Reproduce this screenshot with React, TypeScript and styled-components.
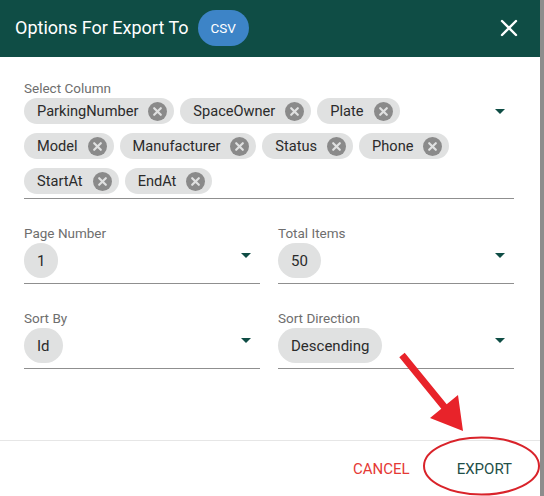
import * as React from "react";
import styled, {createGlobalStyle, css} from "styled-components";

const GlobalStyle = createGlobalStyle`
    html, body {
        margin: 0;
        padding: 0;
        background: #8d8d8d;
        font-family: Roboto, "Liberation Sans", sans-serif;
    }
`;

const teal = "#0f4d45";

const columns = [
    "ParkingNumber", "SpaceOwner", "Plate",
    "Model", "Manufacturer", "Status", "Phone",
    "StartAt", "EndAt",
];

const Dialog = styled.div`
    position: relative;
    width: 540px;
    height: 496px;
    background: #fff;
    display: flex;
    flex-direction: column;
`;

const Header = styled.div`
    height: 57px;
    flex-shrink: 0;
    background: ${teal};
    display: flex;
    align-items: center;
    padding: 0 22px 2px 15px;
    box-sizing: border-box;
`;

const Title = styled.h2`
    margin: 0;
    font-size: 18px;
    font-weight: 400;
    color: #fff;
`;

const Badge = styled.span`
    margin-left: 9px;
    height: 36px;
    padding: 0 13px;
    border-radius: 18px;
    background: #3d84c7;
    color: #fff;
    font-size: 13.5px;
    display: inline-flex;
    align-items: center;
`;

const CloseButton = styled.button`
    margin-left: auto;
    border: 0;
    padding: 0;
    background: none;
    display: flex;
    cursor: pointer;
`;

const Body = styled.div`
    flex: 1;
    padding: 24px 26px 0 24px;
`;

const Field = styled.div`
    display: flex;
    flex-direction: column;
`;

const Label = styled.label`
    font-size: 13.5px;
    line-height: 15px;
    color: #6e6e6e;
`;

const Control = styled.div<{ $pad: number }>`
    display: flex;
    align-items: flex-start;
    margin-top: 2px;
    padding-bottom: ${p => p.$pad}px;
    border-bottom: 1px solid #8f8f8f;
`;

const ChipList = styled.div`
    flex: 1;
    display: flex;
    flex-wrap: wrap;
    gap: 9px 6px;
`;

const chipSizes = {
    sm: css`
        height: 26px;
        padding: 0 7px 0 13px;
        border-radius: 13px;
        font-size: 14.6px;
        gap: 10px;
    `,
    lg: css`
        height: 35px;
        padding: 0 13px;
        border-radius: 17.5px;
        font-size: 15px;
    `,
};

const Chip = styled.span<{ $size: "sm" | "lg" }>`
    display: inline-flex;
    align-items: center;
    background: #e0e1e1;
    color: #2b2b2b;
    ${p => chipSizes[p.$size]}
`;

const Caret = styled.span<{ $top: number }>`
    width: 0;
    height: 0;
    margin: ${p => p.$top}px 9px 0 12px;
    border-left: 5px solid transparent;
    border-right: 5px solid transparent;
    border-top: 5px solid ${teal};
`;

const Grid = styled.div`
    margin-top: 27px;
    display: grid;
    grid-template-columns: 1fr 1fr;
    column-gap: 18px;
    row-gap: 27px;
`;

const Footer = styled.div`
    height: 56px;
    flex-shrink: 0;
    border-top: 1px solid #e6e6e6;
    display: flex;
    justify-content: flex-end;
    align-items: center;
    gap: 23px;
    padding: 0 16px;
    box-sizing: border-box;
`;

const TextButton = styled.button<{ $tone: "danger" | "primary" }>`
    border: 0;
    background: none;
    padding: 8px 12px;
    font-family: inherit;
    font-size: 15px;
    text-transform: uppercase;
    color: ${p => p.$tone === "danger" ? "#e53935" : "#1f4f48"};
    cursor: pointer;
`;

const Annotation = styled.svg`
    position: absolute;
    inset: 0;
    pointer-events: none;
`;

function CancelIcon() {
    return <svg width="19" height="19" viewBox="0 0 19 19">
        <circle cx="9.5" cy="9.5" r="9.5" fill="#8a8a8a"/>
        <path d="M6.2 6.2 L12.8 12.8 M12.8 6.2 L6.2 12.8" stroke="#e0e1e1" strokeWidth="2.2" strokeLinecap="round"/>
    </svg>;
}

function ValueSelect(props: { label: string, value: string }) {
    return <Field>
        <Label>{props.label}</Label>
        <Control $pad={5}>
            <ChipList>
                <Chip $size="lg">{props.value}</Chip>
            </ChipList>
            <Caret $top={10}/>
        </Control>
    </Field>;
}

export default function App() {
    return <>
        <GlobalStyle/>
        <Dialog>
            <Header>
                <Title>Options For Export To</Title>
                <Badge>CSV</Badge>
                <CloseButton aria-label="close">
                    <svg width="18" height="18" viewBox="0 0 18 18">
                        <path d="M2 2 L16 16 M16 2 L2 16" stroke="#fff" strokeWidth="2.4" strokeLinecap="round"/>
                    </svg>
                </CloseButton>
            </Header>
            <Body>
                <Field>
                    <Label>Select Column</Label>
                    <Control $pad={4}>
                        <ChipList>
                            {columns.map(c => <Chip key={c} $size="sm">{c}<CancelIcon/></Chip>)}
                        </ChipList>
                        <Caret $top={11}/>
                    </Control>
                </Field>
                <Grid>
                    <ValueSelect label="Page Number" value="1"/>
                    <ValueSelect label="Total Items" value="50"/>
                    <ValueSelect label="Sort By" value="Id"/>
                    <ValueSelect label="Sort Direction" value="Descending"/>
                </Grid>
            </Body>
            <Footer>
                <TextButton $tone="danger">Cancel</TextButton>
                <TextButton $tone="primary">Export</TextButton>
            </Footer>
            <Annotation width="540" height="496" viewBox="0 0 540 496">
                <polygon
                    points="404.7,352.8 446.7,404.3 458,395 463,431 430,418 441.3,408.7 399.3,357.2"
                    fill="#e8232a"
                />
                <ellipse cx="481.5" cy="466" rx="57.5" ry="28.5" fill="none" stroke="#d9232a" strokeWidth="2"/>
            </Annotation>
        </Dialog>
    </>;
}
